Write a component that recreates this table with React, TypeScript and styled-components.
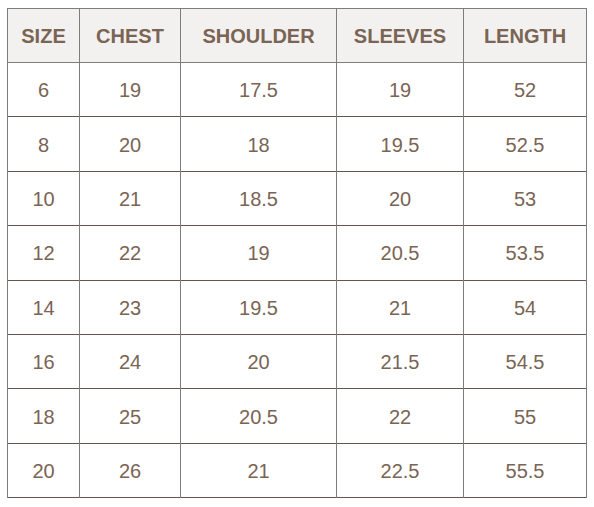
import styled, { createGlobalStyle } from 'styled-components';

const GlobalStyle = createGlobalStyle`
  body {
    margin: 0;
    background: #ffffff;
  }
`;

const sizes = [
  { size: '6', chest: '19', shoulder: '17.5', sleeves: '19', length: '52' },
  { size: '8', chest: '20', shoulder: '18', sleeves: '19.5', length: '52.5' },
  { size: '10', chest: '21', shoulder: '18.5', sleeves: '20', length: '53' },
  { size: '12', chest: '22', shoulder: '19', sleeves: '20.5', length: '53.5' },
  { size: '14', chest: '23', shoulder: '19.5', sleeves: '21', length: '54' },
  { size: '16', chest: '24', shoulder: '20', sleeves: '21.5', length: '54.5' },
  { size: '18', chest: '25', shoulder: '20.5', sleeves: '22', length: '55' },
  { size: '20', chest: '26', shoulder: '21', sleeves: '22.5', length: '55.5' },
];

const columns = [
  { key: 'size', label: 'SIZE', width: 72 },
  { key: 'chest', label: 'CHEST', width: 101 },
  { key: 'shoulder', label: 'SHOULDER', width: 156 },
  { key: 'sleeves', label: 'SLEEVES', width: 127 },
  { key: 'length', label: 'LENGTH', width: 123 },
] as const;

export default function App() {
  return (
    <>
      <GlobalStyle />
      <Page>
        <SizeTable>
          <colgroup>
            {columns.map((c) => (
              <col key={c.key} style={{ width: c.width }} />
            ))}
          </colgroup>
          <thead>
            <tr>
              {columns.map((c) => (
                <HeadCell key={c.key}>{c.label}</HeadCell>
              ))}
            </tr>
          </thead>
          <tbody>
            {sizes.map((row) => (
              <BodyRow key={row.size}>
                {columns.map((c) => (
                  <Cell key={c.key}>{row[c.key]}</Cell>
                ))}
              </BodyRow>
            ))}
          </tbody>
        </SizeTable>
      </Page>
    </>
  );
}

const Page = styled.div`
  padding: 8px 0 0 7px;
`;

const SizeTable = styled.table`
  border-collapse: collapse;
  table-layout: fixed;
  width: 580px;
  font-family: 'Liberation Sans', Arial, sans-serif;
  color: #7a6454;
  border-left: 1px solid #7d7d7d;
  border-right: 1px solid #7d7d7d;
  border-bottom: 1px solid #65554c;
`;

const HeadCell = styled.th`
  height: 51px;
  padding: 2px 0 0;
  background: #f2f1ef;
  font-size: 20px;
  font-weight: 700;
  text-align: center;
  border: 1px solid #7d7d7d;
`;

const BodyRow = styled.tr`
  height: 54.4px;
  border-top: 1px solid #65554c;
`;

const Cell = styled.td`
  padding: 2px 0 0;
  font-size: 20px;
  text-align: center;
  border-left: 1px solid #7d7d7d;
  border-right: 1px solid #7d7d7d;
  border-top: 1px solid #65554c;
`;
